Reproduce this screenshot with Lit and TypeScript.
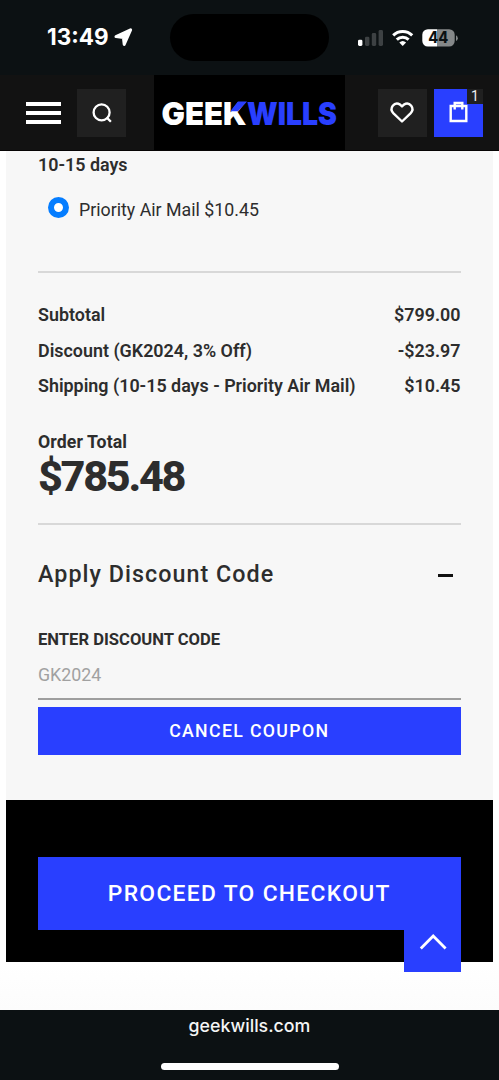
import { LitElement, html, css } from "lit";
import { customElement } from "lit/decorators.js";

@customElement("status-bar")
class StatusBar extends LitElement {
  static styles = css`
    :host { display: block; }
    .bar { height: 75px; box-sizing: border-box; background: #0c1113; display: grid; grid-template-columns: 170px 159px 1fr; align-items: center; font-family: Inter, sans-serif; }
    .left { display: flex; align-items: center; gap: 6px; padding-left: 47px; color: #fff; }
    .time { font-size: 22.5px; font-weight: 700; line-height: 26px; width: 61px; white-space: nowrap; margin-top: -1px; }
    .island { height: 47px; border-radius: 24px; background: #000; }
    .right { display: flex; align-items: center; padding-left: 29px; }
    svg { display: block; flex: none; }
  `;
  render() {
    return html`
      <div class="bar">
        <div class="left">
          <span class="time">13:49</span>
          <svg width="19" height="19" viewBox="0 0 19 19"><path d="M2 8.6 16.6 1.9 10.2 16.4 9.4 9.4Z" fill="#fff" stroke="#fff" stroke-width="3" stroke-linejoin="round"/></svg>
        </div>
        <div class="island"></div>
        <div class="right">
          <svg width="100" height="20" viewBox="358 27 100 20">
            <rect x="358" y="38.7" width="4.4" height="6.3" rx="1.4" fill="#fff"/>
            <rect x="365" y="35.7" width="4.4" height="9.3" rx="1.4" fill="#3d4143"/>
            <rect x="371.8" y="32" width="4.4" height="13" rx="1.4" fill="#3d4143"/>
            <rect x="378.6" y="29" width="4.4" height="16" rx="1.4" fill="#3d4143"/>
            <g fill="none" stroke="#fff" stroke-width="3">
              <path d="M393.2 34.4a13.5 13.5 0 0 1 19 0"/>
              <path d="M396.8 38.6a8.5 8.5 0 0 1 11.8 0"/>
            </g>
            <path d="M402.7 45l-3.4-3.5a5 5 0 0 1 6.8 0z" fill="#fff"/>
            <clipPath id="b"><rect x="422.3" y="28.2" width="32.4" height="17.4" rx="5.6"/></clipPath>
            <g clip-path="url(#b)">
              <rect x="422" y="28" width="15" height="18" fill="#fff"/>
              <rect x="437" y="28" width="18" height="18" fill="#858889"/>
            </g>
            <path d="M456 34.3q1.8 1 1.8 2.9t-1.8 2.9z" fill="#858889"/>
            <text x="438.2" y="42.4" text-anchor="middle" font-family="Inter, sans-serif" font-size="15.5" font-weight="800" fill="#0c1113" textLength="20" lengthAdjust="spacingAndGlyphs">44</text>
          </svg>
        </div>
      </div>`;
  }
}

@customElement("site-header")
class SiteHeader extends LitElement {
  static styles = css`
    :host { display: block; }
    .header { height: 76px; box-sizing: border-box; background: #121212; border-bottom: 1px solid #060404; display: flex; align-items: center; padding: 0 16px 0 26px; }
    .menu { display: flex; flex-direction: column; gap: 5px; width: 35px; margin-right: 16px; }
    .line { height: 4px; background: #fff; }
    .tile { width: 49px; height: 48px; background: #202020; display: flex; align-items: center; justify-content: center; }
    .cart { background: #293fff; position: relative; }
    .badge { position: absolute; top: 0; right: 0; width: 16px; height: 15px; background: #202020; color: #f0f0f0; font: 14px/15px Roboto, sans-serif; text-align: center; }
    .logo { width: 191px; height: 75px; background: #000; margin: 0 33px 0 28px; }
    .gap { width: 7px; }
    svg { display: block; overflow: visible; }
    .cart svg { margin-bottom: 1px; }
    .heart { margin-right: 2px; }
  `;
  render() {
    return html`
      <div class="header">
        <div class="menu"><div class="line"></div><div class="line"></div><div class="line"></div></div>
        <div class="tile">
          <svg width="24" height="24" viewBox="0 0 24 24" fill="none" stroke="#fff" stroke-width="2.3"><circle cx="11.6" cy="11.4" r="8"/><path d="M16.6 16.4l4.3 4.3"/></svg>
        </div>
        <div class="logo">
          <svg width="191" height="75" viewBox="0 0 191 75" font-family="Inter, sans-serif" font-size="31.5" font-weight="900">
            <text x="7.5" y="49.6" fill="#fff" textLength="85" lengthAdjust="spacingAndGlyphs">GEEK</text>
            <text x="93" y="49.6" fill="#293fff" textLength="90" lengthAdjust="spacingAndGlyphs">WILLS</text>
            <path d="M84 26.6H93L84 36.2H76.3Z" fill="#293fff"/>
          </svg>
        </div>
        <div class="tile">
          <svg class="heart" width="24" height="22" viewBox="0 0 24 22" fill="none" stroke="#fff" stroke-width="2.4" stroke-linejoin="round"><path d="M12 19.5 3.5 11.4C-1.4 6.3 4.3-.8 10.1 2.6L12 4.4l1.9-1.8C19.7-.8 25.4 6.3 20.5 11.4Z"/></svg>
        </div>
        <div class="gap"></div>
        <div class="tile cart">
          <svg width="20" height="22" viewBox="0 0 20 22" fill="none" stroke="#fff" stroke-width="2.4"><path d="M1.7 5h15.6v15H1.7zM5.7 8.5V2h7.6v6.5"/></svg>
          <span class="badge">1</span>
        </div>
      </div>`;
  }
}

@customElement("app-root")
class AppRoot extends LitElement {
  static styles = css`
    :host { display: block; height: 1080px; overflow: hidden; background: #fff; font-family: Roboto, sans-serif; color: #2d2d2d; }
    .summary { height: 649px; box-sizing: border-box; margin: 0 6.5px 0 6px; padding: 0 32px; background: #f7f7f7; }
    .method { font-size: 17.9px; font-weight: 600; line-height: 28px; }
    .option { display: flex; align-items: center; height: 58px; padding-left: 10px; gap: 10px; font-size: 17.8px; line-height: 24px; }
    .radio { width: 21px; height: 21px; box-sizing: border-box; border: 6px solid #057dff; border-radius: 50%; background: #fff; margin-bottom: 1px; }
    .option span { padding-top: 3px; }
    .rule { height: 2px; background: #d8d8d8; }
    .first { margin-top: 34px; }
    .rows { padding-top: 24px; }
    .row { display: flex; justify-content: space-between; font-size: 17.9px; line-height: 35.5px; font-weight: 600; white-space: nowrap; }
    .total-label { margin-top: 26px; font-size: 17.7px; line-height: 22px; font-weight: 700; letter-spacing: 0.1px; padding-top: 1px; }
    .total { font-size: 43.2px; line-height: 46px; font-weight: 800; letter-spacing: -2.3px; margin-top: 1px; }
    .second { margin-top: 23px; }
    .fold { display: flex; align-items: center; justify-content: space-between; height: 98.5px; font-size: 23.3px; font-weight: 500; letter-spacing: 1.03px; padding-right: 7.5px; }
    .minus { width: 15.5px; height: 3px; background: #111; margin-top: 3px; }
    .label { font-size: 16.6px; line-height: 24px; font-weight: 700; margin-top: 5px; }
    .field { height: 47px; box-sizing: border-box; margin-top: 1px; border-bottom: 2.5px solid #9e9e9e; font-size: 17.8px; line-height: 43px; color: #a1a1a1; }
    .button { display: flex; align-items: center; justify-content: center; background: #293fff; color: #fff; font-weight: 500; }
    .cancel { height: 48px; margin-top: 6.5px; font-size: 17.7px; letter-spacing: 1.35px; }
    .checkout { height: 162px; box-sizing: border-box; margin: 0 6.5px 0 6px; padding: 57px 32px 0; background: #000; position: relative; }
    .proceed { height: 73.4px; font-size: 22.8px; letter-spacing: 1.33px; }
    .top { position: absolute; right: 31.5px; bottom: -10px; width: 57px; height: 43px; background: #293fff; }
    .top svg { display: block; }
    .space { height: 48px; background: linear-gradient(#fff, #fcfcfc); }
    .browser { height: 70px; background: #0c1113; color: #f4f5f5; font: 500 17.8px/32px Inter, sans-serif; text-align: center; display: flex; flex-direction: column; align-items: center; }
    .home { width: 178px; height: 7px; border-radius: 4px; background: #fff; margin-top: 21px; }
  `;
  private costs = [
    ["Subtotal", "$799.00"],
    ["Discount (GK2024, 3% Off)", "-$23.97"],
    ["Shipping (10-15 days - Priority Air Mail)", "$10.45"],
  ];
  render() {
    return html`
      <status-bar></status-bar>
      <site-header></site-header>
      <div class="summary">
        <div class="method">10-15 days</div>
        <div class="option"><div class="radio"></div><span>Priority Air Mail $10.45</span></div>
        <div class="rule first"></div>
        <div class="rows">${this.costs.map(([name, price]) => html`<div class="row"><span>${name}</span><span>${price}</span></div>`)}</div>
        <div class="total-label">Order Total</div>
        <div class="total">$785.48</div>
        <div class="rule second"></div>
        <div class="fold"><span>Apply Discount Code</span><div class="minus"></div></div>
        <div class="label">ENTER DISCOUNT CODE</div>
        <div class="field">GK2024</div>
        <div class="button cancel">CANCEL COUPON</div>
      </div>
      <div class="checkout">
        <div class="button proceed">PROCEED TO CHECKOUT</div>
        <div class="top"><svg width="57" height="43" viewBox="0 0 57 43" fill="none" stroke="#fff" stroke-width="2.8"><path d="M16.8 19.5 29.2 7 41.6 19.5"/></svg></div>
      </div>
      <div class="space"></div>
      <div class="browser"><span>geekwills.com</span><div class="home"></div></div>`;
  }
}
